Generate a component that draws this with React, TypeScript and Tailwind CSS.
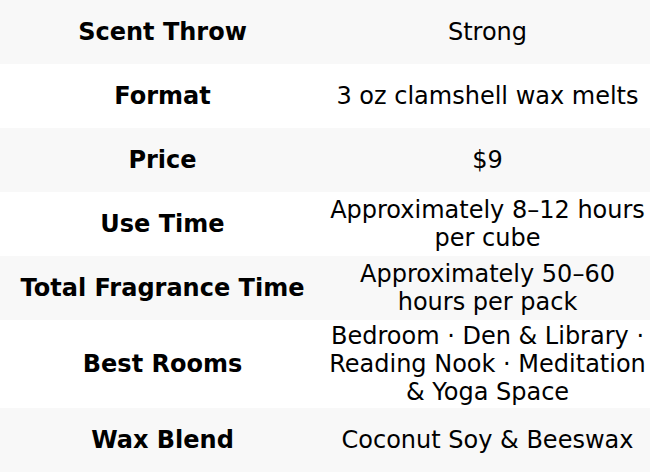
import React from "react";

const rows: [string, string][] = [
  ["Scent Throw", "Strong"],
  ["Format", "3 oz clamshell wax melts"],
  ["Price", "$9"],
  ["Use Time", "Approximately 8–12 hours per cube"],
  ["Total Fragrance Time", "Approximately 50–60 hours per pack"],
  ["Best Rooms", "Bedroom · Den & Library · Reading Nook · Meditation & Yoga Space"],
  ["Wax Blend", "Coconut Soy & Beeswax"],
];

export default function App() {
  return (
    <div className="w-[650px] bg-white text-black font-['DejaVu_Sans',sans-serif] text-[24px] leading-[28px]">
      <table className="w-full table-fixed border-collapse">
        <tbody>
          {rows.map(([k, v], i) => (
            <tr key={k} className={i % 2 === 0 ? "bg-[#f8f8f8]" : "bg-white"}>
              <th className="h-[64px] w-1/2 px-[4px] py-[2px] text-center align-middle font-bold">{k}</th>
              <td className="h-[64px] w-1/2 px-[4px] py-[2px] text-center align-middle">{v}</td>
            </tr>
          ))}
        </tbody>
      </table>
    </div>
  );
}
